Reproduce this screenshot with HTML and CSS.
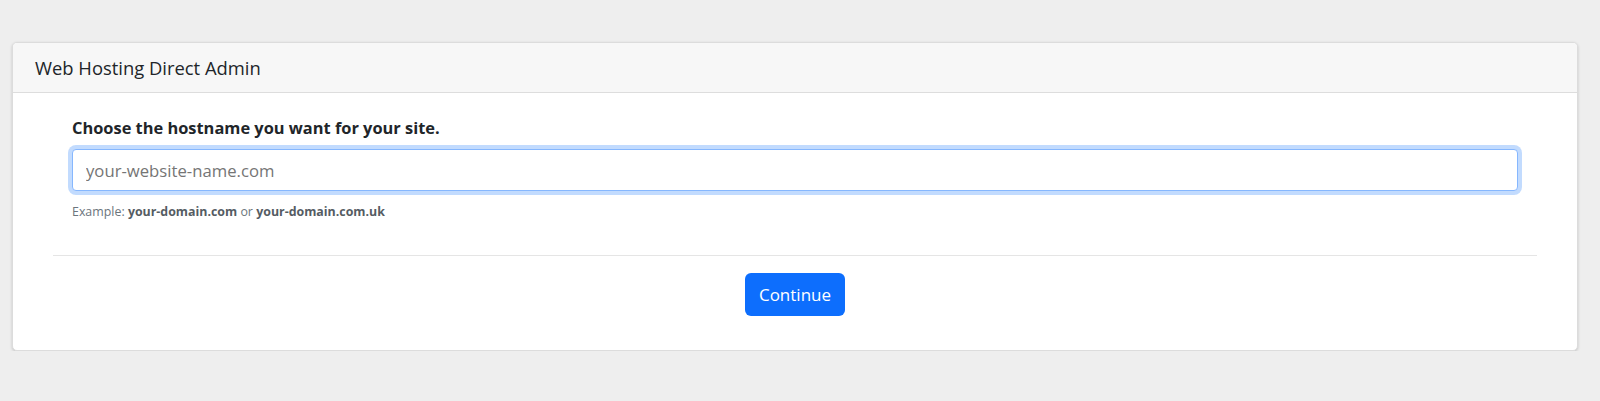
FILE: index.html
```html
<!DOCTYPE html>
<html lang="en">
<head>
    <meta charset="UTF-8">
    <meta name="viewport" content="width=device-width, initial-scale=1.0">
    <title>Web Hosting Direct Admin</title>
    <link rel="stylesheet" href="styles.css">
</head>
<body>
    <div class="card">
        <div class="card-header">Web Hosting Direct Admin</div>
        <div class="card-body">
            <form id="hostname-form">
                <div class="form-group">
                    <label for="hostname">Choose the hostname you want for your site.</label>
                    <input type="text" id="hostname" class="focused" placeholder="your-website-name.com">
                    <div class="form-text">Example: <b>your-domain.com</b> or <b>your-domain.com.uk</b></div>
                </div>
                <hr>
                <div class="btn-container">
                    <button type="submit">Continue</button>
                </div>
            </form>
        </div>
    </div>
</body>
</html>
```

FILE: styles.css
```css
/* Page */
body {
    margin: 0;
    padding: 42px 22px 0 12px;
    background-color: #eeeeee;
    font-family: "Open Sans", Arial, sans-serif;
    color: #212529;
}

.card {
    background-color: #fff;
    border: 1px solid #dcdcdc;
    border-radius: 5px;
    box-shadow: 0 1px 3px rgba(0, 0, 0, 0.18);
    overflow: hidden;
}

.card-header {
    height: 49px;
    line-height: 49px;
    padding: 0 22px;
    background-color: #f7f7f7;
    border-bottom: 1px solid #dddddd;
    font-size: 18.4px;
}

.card-body {
    padding: 23px 40px 34px;
}

.form-group {
    padding: 0 19px;
}

label {
    display: block;
    font-size: 16.4px;
    font-weight: bold;
    line-height: 24px;
    margin-bottom: 9px;
}

input {
    display: block;
    box-sizing: border-box;
    width: 100%;
    height: 42px;
    padding: 0 13px;
    font-family: inherit;
    font-size: 16.7px;
    color: #212529;
    border: 1px solid #ced4da;
    border-radius: 4px;
    outline: none;
}

input::placeholder {
    color: #757575;
}

input.focused,
input:focus {
    border-color: #86b7fe;
    box-shadow: 0 0 0 4px rgba(13, 110, 253, 0.25);
}

.form-text {
    margin-top: 12px;
    font-size: 12.4px;
    color: #6c757d;
}

.form-text b {
    color: #555c63;
}

hr {
    margin: 35px 0 17px;
    border: 0;
    border-top: 1px solid #e5e5e5;
}

.btn-container {
    text-align: center;
}

button {
    height: 43px;
    padding: 0 14px;
    font-family: inherit;
    font-size: 17px;
    color: #fff;
    background-color: #0d6efd;
    border: 0;
    border-radius: 6px;
    cursor: pointer;
}
```
